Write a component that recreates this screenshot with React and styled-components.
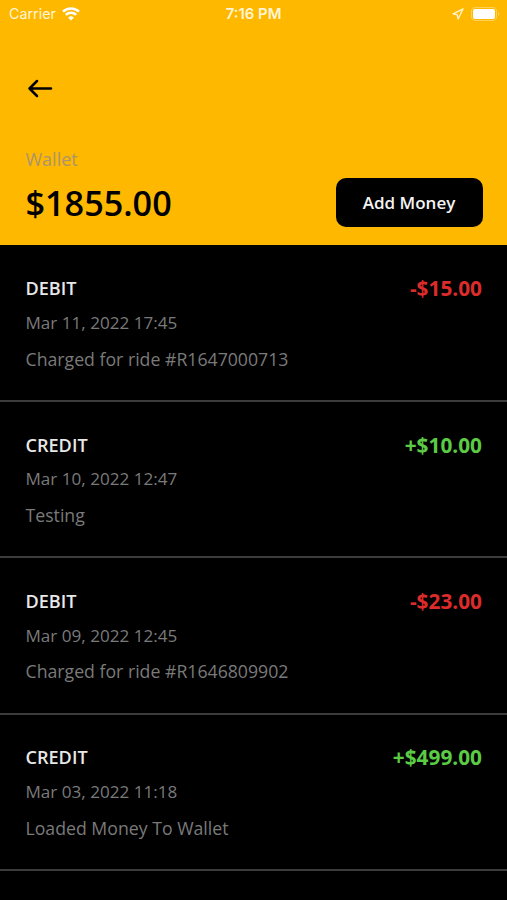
import styled, { createGlobalStyle } from "styled-components"

const GlobalStyle = createGlobalStyle`
  * {
    box-sizing: border-box;
  }
  body {
    margin: 0;
    background-color: #000;
    font-family: "Open Sans", sans-serif;
  }
`

const Container = styled.div`
  height: 900px;
  overflow: hidden;
  background-color: #000;
`

const Header = styled.header`
  height: 245px;
  background-color: #ffb800;
`

const StatusBar = styled.div`
  height: 27px;
  padding: 0 7px 0 9px;
  display: grid;
  grid-template-columns: 1fr auto 1fr;
  align-items: center;
  color: #fff5d6;
  font-family: Inter, sans-serif;
  font-size: 14.3px;
`

const Carrier = styled.div`
  display: flex;
  align-items: center;
  gap: 6px;
`

const Time = styled.div`
  margin-right: 2px;
  font-size: 14.9px;
  font-weight: 600;
`

const Indicators = styled.div`
  display: flex;
  align-items: center;
  justify-content: flex-end;
  gap: 7px;
`

const BackButton = styled.button`
  display: block;
  margin: 51px 0 0 27px;
  padding: 0;
  border: none;
  background: none;
  width: 26px;
  height: 22px;
`

const Balance = styled.div`
  display: flex;
  justify-content: space-between;
  padding: 47px 24.5px 0 25.5px;
`

const Label = styled.div`
  color: #ac956b;
  font-size: 18px;
  line-height: 25px;
`

const Amount = styled.h1`
  margin: 7px 0 0;
  font-size: 34.2px;
  font-weight: 600;
  line-height: 48px;
`

const Button = styled.button`
  width: 147px;
  height: 49px;
  margin-top: 31px;
  padding: 0;
  border: none;
  border-radius: 10px;
  background-color: #000;
  color: #f4f4f4;
  font-family: inherit;
  font-size: 17px;
  font-weight: 600;
`

const List = styled.div`
  padding-top: 0.7px;
`

const Item = styled.div`
  height: 156.33px;
  padding: 29.8px 25px 0 25.5px;
  border-bottom: 2px solid #3c3c3c;
`

const Row = styled.div`
  display: flex;
  justify-content: space-between;
  align-items: center;
  height: 26px;
`

const Type = styled.div`
  color: #e8e8e8;
  font-size: 18.1px;
  font-weight: 600;
`

const Value = styled.div`
  color: ${(props) => (props.$credit ? "#5bcb45" : "#dc2b2b")};
  font-size: 20.8px;
  font-weight: 700;
`

const Detail = styled.div`
  margin-top: ${(props) => props.$gap}px;
  color: #7a7a7a;
  font-size: ${(props) => props.$size}px;
  line-height: 26px;
`

const transactions = [
  { type: "DEBIT", value: "-$15.00", date: "Mar 11, 2022 17:45", note: "Charged for ride #R1647000713" },
  { type: "CREDIT", value: "+$10.00", date: "Mar 10, 2022 12:47", note: "Testing" },
  { type: "DEBIT", value: "-$23.00", date: "Mar 09, 2022 12:45", note: "Charged for ride #R1646809902" },
  { type: "CREDIT", value: "+$499.00", date: "Mar 03, 2022 11:18", note: "Loaded Money To Wallet" },
]

const Transaction = ({ item }) => {
  return (
    <Item>
      <Row>
        <Type>{item.type}</Type>
        <Value $credit={item.type === "CREDIT"}>{item.value}</Value>
      </Row>
      <Detail $gap={8.5} $size={17.1}>{item.date}</Detail>
      <Detail $gap={9.8} $size={17.7}>{item.note}</Detail>
    </Item>
  )
}

const App = () => {
  return (
    <Container>
      <GlobalStyle />
      <Header>
        <StatusBar>
          <Carrier>
            Carrier
            <svg width="18" height="14" viewBox="0 0 18 14" fill="none" stroke="#fff" strokeWidth="2.5">
              <path d="M1 4.7a11.3 11.3 0 0 1 16 0M3.8 7.9a7.4 7.4 0 0 1 10.4 0" />
              <path d="M9 13.5 6.1 10.7a4.1 4.1 0 0 1 5.8 0z" fill="#fff" stroke="none" />
            </svg>
          </Carrier>
          <Time>7:16 PM</Time>
          <Indicators>
            <svg width="12" height="12" viewBox="0 0 12 12" fill="none" stroke="#fff2c8" strokeWidth="1.4">
              <path d="M11 1 1 5.8l4.2.9.9 4.3z" strokeLinejoin="round" />
            </svg>
            <svg width="29" height="14" viewBox="0 0 29 14">
              <rect x=".5" y=".5" width="25" height="13" rx="3.5" fill="none" stroke="#fff" strokeOpacity=".35" />
              <rect x="2" y="2" width="22" height="10" rx="2" fill="#fff" />
              <path d="M27 5a2.2 2.2 0 0 1 0 4z" fill="#fff" fillOpacity=".35" />
            </svg>
          </Indicators>
        </StatusBar>
        <BackButton aria-label="Back">
          <svg width="26" height="22" viewBox="0 0 26 22" fill="none" stroke="#000" strokeWidth="2.5" strokeLinecap="round" strokeLinejoin="round">
            <path d="M24 10.5H2.5M10 3 2.5 10.5 10 18" />
          </svg>
        </BackButton>
        <Balance>
          <div>
            <Label>Wallet</Label>
            <Amount>$1855.00</Amount>
          </div>
          <Button>Add Money</Button>
        </Balance>
      </Header>
      <List>
        {transactions.map((item) => (
          <Transaction item={item} key={item.date} />
        ))}
      </List>
    </Container>
  )
}

export default App
